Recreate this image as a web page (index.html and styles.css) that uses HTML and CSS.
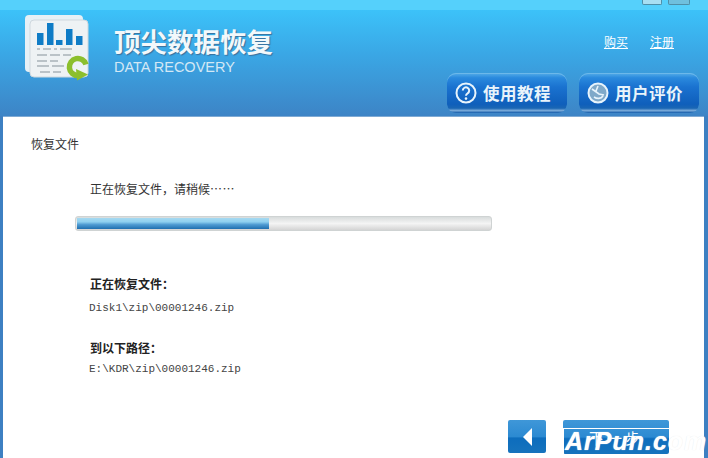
FILE: index.html
```html
<!DOCTYPE html>
<html lang="zh-CN">
  <head>
    <meta charset="UTF-8" />
    <title>顶尖数据恢复</title>
    <link rel="stylesheet" href="styles.css">
  </head>
  <body>
    <div class="window">
      <div class="titlebar">
        <span class="win-btn win-min"></span>
        <span class="win-btn win-close"></span>
      </div>
      <header class="header">
        <svg class="logo" width="68" height="68" viewBox="0 0 68 68">
          <rect x="1" y="1" width="58" height="57" rx="4" fill="#e6f0f6" />
          <rect x="6" y="6" width="58" height="57" rx="4" fill="#eef2f4" stroke="#cfd8de" />
          <rect x="13" y="19" width="6.5" height="12" fill="#0f7cc6" />
          <rect x="23" y="9" width="6.5" height="22" fill="#0f7cc6" />
          <rect x="32" y="26" width="6.5" height="5" fill="#0f7cc6" />
          <rect x="42" y="15" width="6.5" height="16" fill="#0f7cc6" />
          <rect x="52" y="22" width="6.5" height="9" fill="#0f7cc6" />
          <path d="M13 35h3M19 35h8M30 35h3M36 35h12M13 41h10M26 41h10M39 41h8M13 47h10M26 47h8M13 52h12M28 52h12M16 58h10M29 58h8" stroke="#a9b2b8" stroke-width="1.6" />
          <path d="M62 50.5a8.5 8.5 0 1 0-8 11" fill="none" stroke="#8cbf2d" stroke-width="5.5" />
          <path d="M52 55l12 5.5-11 6z" fill="#8cbf2d" />
        </svg>
        <div class="brand">
          <div class="brand-cn">顶尖数据恢复</div>
          <div class="brand-en">DATA RECOVERY</div>
        </div>
        <div class="header-right">
          <div class="links">
            <a href="#buy">购买</a>
            <a href="#reg">注册</a>
          </div>
          <div class="nav-buttons">
            <a class="nav-btn" href="#help">
              <svg width="24" height="24" viewBox="0 0 24 24">
                <circle cx="12" cy="12" r="9.5" fill="none" stroke="#e8f4fc" stroke-width="2" />
                <path d="M8.8 9.5a3.2 3.2 0 1 1 4.8 2.8c-1 .6-1.6 1.2-1.6 2.4" fill="none" stroke="#e8f4fc" stroke-width="2" />
                <circle cx="12" cy="17.6" r="1.3" fill="#e8f4fc" />
              </svg>
              使用教程
            </a>
            <a class="nav-btn" href="#review">
              <svg width="24" height="24" viewBox="0 0 24 24">
                <circle cx="12" cy="12" r="9.5" fill="#7fa9c9" stroke="#e8f4fc" stroke-width="2" />
                <path d="M6 8l7 5 5 1M8 16c3 2 7 2 9-1M12 5l-2 5" fill="none" stroke="#e8f4fc" stroke-width="1.6" />
              </svg>
              用户评价
            </a>
          </div>
        </div>
      </header>
      <main class="panel">
        <h2 class="panel-title">恢复文件</h2>
        <p class="status">正在恢复文件，请稍候<span class="dots">…&thinsp;…</span></p>
        <div class="progress"><div class="progress-fill"></div></div>
        <h3 class="label label-first">正在恢复文件：</h3>
        <p class="path">Disk1\zip\00001246.zip</p>
        <h3 class="label label-second">到以下路径：</h3>
        <p class="path path-second">E:\KDR\zip\00001246.zip</p>
        <div class="actions">
          <button class="btn-back"><span class="arrow"></span></button>
          <button class="btn-next">下一步</button>
        </div>
      </main>
      <div class="watermark">ArPun.com</div>
    </div>
  </body>
</html>
```

FILE: styles.css
```css
html,
body {
  margin: 0;
  padding: 0;
}
body {
  width: 708px;
  height: 458px;
  overflow: hidden;
  font-family: "Noto Sans CJK SC", "Liberation Sans", sans-serif;
}
.window {
  position: relative;
  display: flex;
  flex-direction: column;
  width: 708px;
  height: 458px;
  overflow: hidden;
  background-color: #3d80c2;
}
.titlebar {
  display: flex;
  justify-content: flex-end;
  align-items: flex-start;
  gap: 6px;
  height: 10px;
  padding-right: 18px;
  background-color: #55d0fb;
}
.win-btn {
  display: block;
  height: 4px;
  background-color: #a8dff2;
  border: 1px solid #4f8fa8;
  border-top: none;
  border-radius: 0 0 2px 2px;
}
.win-min {
  width: 18px;
}
.win-close {
  width: 20px;
  background-color: #6fc0de;
}

.header {
  display: flex;
  height: 106px;
  background: linear-gradient(to bottom, #3cc2f9 0%, #3aa8e6 40%, #3d84c6 100%);
}
.logo {
  margin: 4px 0 0 24px;
}
.brand {
  margin: 15px 0 0 22px;
}
.brand-cn {
  font-size: 26.5px;
  line-height: 32px;
  font-weight: 700;
  color: #f2f8fb;
  text-shadow: 1px 1px 1px #3a6f9c;
}
.brand-en {
  margin-top: 1px;
  font-family: "Liberation Sans", sans-serif;
  font-size: 14.5px;
  line-height: 18px;
  color: #d3e8f5;
}
.header-right {
  margin-left: auto;
  padding-right: 9px;
}
.links {
  display: flex;
  justify-content: flex-end;
  gap: 22px;
  padding: 24px 25px 0 0;
  height: 39px;
  box-sizing: border-box;
  font-size: 12px;
  line-height: 16px;
}
.links a {
  color: #fff;
  text-decoration: underline;
}
.nav-buttons {
  display: flex;
  gap: 12px;
  margin-top: 24px;
}
.nav-btn {
  display: flex;
  align-items: center;
  gap: 5px;
  box-sizing: border-box;
  width: 120px;
  height: 40px;
  padding-left: 7px;
  border-radius: 9px;
  font-size: 16.5px;
  font-weight: 700;
  letter-spacing: 0.5px;
  color: #e9f4fb;
  text-decoration: none;
  background: linear-gradient(to bottom, #55aee8 0%, #2a8ade 12%, #1a72d0 35%, #0f5fbb 78%, #1a66b4 88%, #79a9d8 94%, #0f58a8 100%);
  box-shadow: inset 0 1px 0 #6cb8ea;
}

.panel {
  flex: 1;
  margin: 0 4px 0 3px;
  padding: 18px 0 0 28px;
  background-color: #fff;
  border-top: 1px solid #7faad4;
  color: #333;
}
.panel-title {
  margin: 0;
  font-size: 12px;
  line-height: 18px;
  font-weight: 400;
}
.status {
  margin: 27px 0 0 59px;
  font-size: 12px;
  line-height: 18px;
}
.dots {
  letter-spacing: -1px;
}
.progress {
  box-sizing: border-box;
  width: 417px;
  height: 15px;
  margin: 18px 0 0 44px;
  padding: 1px;
  background: linear-gradient(to bottom, #d8dcdc, #f4f4f4 50%, #d4d4d4);
  border: 1px solid #cfd3d3;
  border-radius: 3px;
}
.progress-fill {
  width: 192px;
  height: 100%;
  background: linear-gradient(to bottom, #a6d9f0 0%, #8fd0f0 35%, #4f9bd2 60%, #1f6fb0 100%);
}
.label {
  margin: 44px 0 0 59px;
  font-size: 12px;
  line-height: 18px;
  font-weight: 700;
  color: #222;
}
.label-second {
  margin-top: 23px;
}
.path {
  margin: 7px 0 0 58px;
  font-family: "Liberation Mono", monospace;
  font-size: 11px;
  line-height: 16px;
  color: #444;
}
.path-second {
  margin-top: 4px;
}
.actions {
  display: flex;
  gap: 17px;
  margin: 43px 0 0 477px;
}
.actions button {
  border: none;
  padding: 0;
  border-radius: 2px;
  background: linear-gradient(to bottom, #3f97d8 0%, #2c8ad2 50%, #0d6dbd 55%, #1673bd 100%);
}
.btn-back {
  display: flex;
  align-items: center;
  justify-content: center;
  width: 38px;
  height: 33px;
}
.arrow {
  width: 0;
  height: 0;
  border-style: solid;
  border-width: 9px 9px 9px 0;
  border-color: transparent #fff transparent transparent;
}
.btn-next {
  width: 106px;
  height: 34px;
  font-family: inherit;
  font-size: 15px;
  letter-spacing: 3px;
  color: #fff;
}
.watermark {
  position: absolute;
  left: 563px;
  top: 428px;
  box-sizing: border-box;
  width: 141px;
  height: 27px;
  padding-left: 1px;
  border: 1px solid #fff;
  border-bottom: none;
  font-family: "Liberation Sans", sans-serif;
  font-size: 25px;
  line-height: 24px;
  font-weight: 700;
  font-style: italic;
  letter-spacing: 1px;
  color: #fff;
  text-shadow: 0 0 1px #e4e8ea;
  white-space: nowrap;
}
```
